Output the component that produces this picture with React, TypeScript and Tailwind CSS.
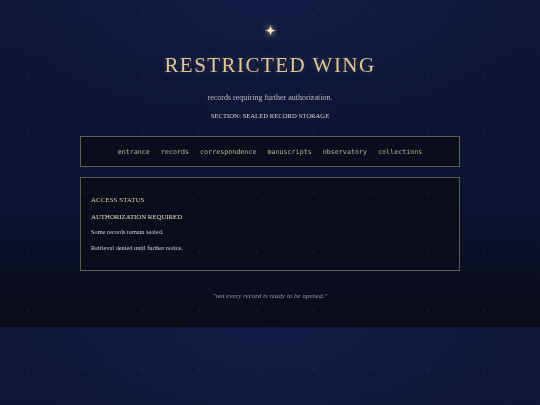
import React from "react";

const serif = "font-['Liberation_Serif','Times_New_Roman',serif]";
const mono = "font-['DejaVu_Sans_Mono','Liberation_Mono',monospace]";

const links = ["entrance", "records", "correspondence", "manuscripts", "observatory", "collections"];

function Sparkle() {
  return (
    <svg width="11" height="11" viewBox="0 0 20 20" className="drop-shadow-[0_0_3px_rgba(240,210,150,0.9)]">
      <path d="M10 0 C11 6.5 13.5 9 20 10 C13.5 11 11 13.5 10 20 C9 13.5 6.5 11 0 10 C6.5 9 9 6.5 10 0 Z" fill="#f3e2b6" />
    </svg>
  );
}

export default function App() {
  return (
    <div className="relative h-[405px] w-full overflow-hidden bg-[#0c1230] antialiased">
      <main
        className={`flex h-[327px] flex-col items-center ${serif} bg-[radial-gradient(ellipse_70%_55%_at_50%_0%,rgba(24,36,86,0.45),transparent_70%),linear-gradient(to_bottom,#0e1536_0%,#0d1332_64%,#0b0f24_80%,#090c18_100%)] [will-change:transform]`}
      >
        <div className="mt-[25px] flex h-[11px] items-center justify-center">
          <Sparkle />
        </div>
        <h1 className="mt-[19px] text-[21px] leading-[21px] tracking-[0.07em] text-[#dcc896] [text-shadow:0_0_6px_rgba(220,200,150,0.25)]">
          RESTRICTED WING
        </h1>
        <p className="mt-[18px] text-[8px] leading-[8px] text-[#b9bdc9]">records requiring further authorization.</p>
        <p className="mt-[10px] text-[6.7px] leading-[7px] text-[#d6d6dc]">SECTION: SEALED RECORD STORAGE</p>

        <nav className="mt-[17px] flex h-[31px] w-[380px] items-center justify-center gap-[11px] border border-[#625e53] bg-[#0a0d1c]">
          {links.map((l) => (
            <span key={l} className={`${mono} text-[6.7px] leading-[8px] text-[#b8b09a]`}>
              {l}
            </span>
          ))}
        </nav>

        <section className="mt-[10px] flex h-[94px] w-[380px] flex-col border border-[#5e5a4d] bg-[#0a0d1c] px-[10px] pt-[18px]">
          <h2 className="text-[6.8px] leading-[7px] tracking-[0.02em] text-[#e0cfa2]">ACCESS STATUS</h2>
          <p className="mt-[10px] text-[6.8px] leading-[7px] text-[#e2dac4]">AUTHORIZATION REQUIRED</p>
          <p className="mt-[8px] text-[6.3px] leading-[7px] text-[#d0d0d6]">Some records remain sealed.</p>
          <p className="mt-[9px] text-[6.3px] leading-[7px] text-[#d0d0d6]">Retrieval denied until further notice.</p>
        </section>

        <p className="mt-[21px] text-[7px] italic leading-[8px] text-[#9598a6]">"not every record is ready to be opened."</p>
      </main>
      <div className="h-[78px] bg-[radial-gradient(ellipse_70%_55%_at_50%_0%,rgba(24,36,86,0.45),transparent_70%),linear-gradient(to_bottom,#0e1536,#0d1332)] bg-[length:100%_327px] bg-no-repeat" />
      {/* faint star field */}
      <div className="pointer-events-none absolute inset-0 bg-[radial-gradient(circle,rgba(150,160,200,0.12)_0.8px,transparent_1.2px)] bg-[length:57px_59px] bg-[position:0px_-14px]" />
    </div>
  );
}
